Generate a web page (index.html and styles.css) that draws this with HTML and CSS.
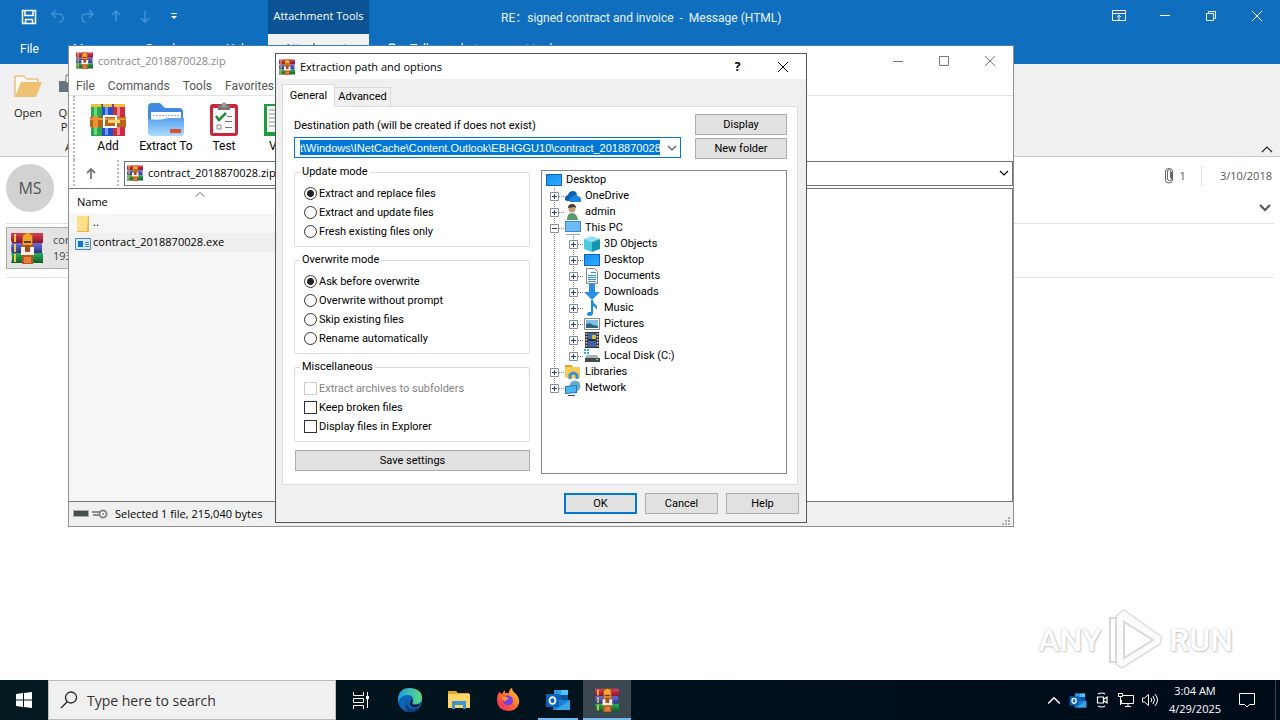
FILE: index.html
```html
<!DOCTYPE html>
<html lang="en">
<head>
<meta charset="utf-8">
<title>RE：signed contract and invoice - Message (HTML)</title>
<link rel="stylesheet" href="styles.css">
</head>
<body>
<svg class="defs" aria-hidden="true">
  <defs>
    <linearGradient id="gFolder" x1="0" y1="0" x2="0" y2="1"><stop offset="0" stop-color="#5aa2ee"/><stop offset="1" stop-color="#a9dcfb"/></linearGradient>
    <linearGradient id="gScreen" x1="0" y1="0" x2="1" y2="1"><stop offset="0" stop-color="#1590ee"/><stop offset="1" stop-color="#2fabff"/></linearGradient>
    <linearGradient id="gEdge" x1="0" y1="0" x2="1" y2="0"><stop offset="0" stop-color="#1b9de2"/><stop offset="1" stop-color="#5fdc7c"/></linearGradient>
    <linearGradient id="gFox" x1="0" y1="1" x2="1" y2="0"><stop offset="0" stop-color="#f0207a"/><stop offset=".5" stop-color="#ff6a2a"/><stop offset="1" stop-color="#ffd83a"/></linearGradient>
    <linearGradient id="gRed" x1="0" y1="0" x2="0" y2="1"><stop offset="0" stop-color="#d8405a"/><stop offset="1" stop-color="#86142a"/></linearGradient>
    <linearGradient id="gBlue" x1="0" y1="0" x2="0" y2="1"><stop offset="0" stop-color="#6a70d8"/><stop offset="1" stop-color="#2c2f86"/></linearGradient>
    <linearGradient id="gGreen" x1="0" y1="0" x2="0" y2="1"><stop offset="0" stop-color="#2fae58"/><stop offset="1" stop-color="#0c5f28"/></linearGradient>
    <symbol id="rar" viewBox="0 0 32 32">
      <path fill="url(#gRed)" d="M0 1h32v10H1Q-1 6 0 1z"/>
      <path fill="url(#gBlue)" d="M1 11h30v10H1q-2-5 0-10z"/>
      <path fill="url(#gGreen)" d="M0 21h32v10H0q2-5 0-10z"/>
      <path fill="#f2c94a" d="M3 2h2v8H3zM3 12h2v8H3zM3 22h2v8H3z"/>
      <path fill="#b9571a" d="M11 1h11v31H11z"/><path fill="#f3a534" d="M12 4q5-6 9 0v9h-9z"/><path fill="#6f3a1c" d="M13 9h7v2h-7z"/>
      <path fill="#f7f1ea" d="M10 15h13v8H10z"/><path fill="#a04c25" d="M14 13h5v7h-5z"/><path fill="#e0803a" d="M13 25h7v6h-7z"/>
    </symbol>
    <symbol id="screen" viewBox="0 0 16 16"><path fill="#0a69bd" d="M0 2h16v12H0z"/><path fill="url(#gScreen)" d="M1 3h14v10H1z"/></symbol>
    <symbol id="outlook" viewBox="0 0 24 24">
      <path fill="#1066b5" d="M8 2h14v10H8z"/><path fill="#2a9be8" d="M8 2h7v5H8z"/><path fill="#54c3f7" d="M15 2h7v5h-7z"/><path fill="#0f4f9b" d="M15 7h7v6h-7z"/>
      <path fill="#1a7fd0" d="M7 12h17v10H7z"/><path fill="#3aa5e6" d="M24 12v10H9z"/>
      <path fill="#0a63b8" d="M0 6h13v13H0z"/><ellipse cx="6.500" cy="12.500" rx="3" ry="3.400" fill="none" stroke="#fff" stroke-width="1.800"/>
    </symbol>
    <symbol id="close" viewBox="0 0 12 12"><path fill="none" stroke="currentColor" d="M1 1l10 10M11 1L1 11"/></symbol>
    <symbol id="down" viewBox="0 0 12 12"><path fill="none" stroke="currentColor" stroke-width="1.200" d="M2 4l4 4 4-4"/></symbol>
    <symbol id="up" viewBox="0 0 12 12"><path fill="none" stroke="currentColor" stroke-width="1.200" d="M1 9l5-5 5 5"/></symbol>
    <symbol id="twig" viewBox="0 0 19 16">
      <path fill="none" stroke="#888" stroke-dasharray="1 1" d="M8.500 0v16M13 8.500h6"/>
      <path fill="#fff" stroke="#8b8b9b" d="M4.500 4.500h8v8h-8z"/><path stroke="#223a8c" d="M6 8.500h5M8.500 6v5"/>
    </symbol>
    <symbol id="twigopen" viewBox="0 0 19 16">
      <path fill="none" stroke="#888" stroke-dasharray="1 1" d="M8.500 0v16M13 8.500h6"/>
      <path fill="#fff" stroke="#8b8b9b" d="M4.500 4.500h8v8h-8z"/><path stroke="#223a8c" d="M6 8.500h5"/>
    </symbol>
    <symbol id="twigend" viewBox="0 0 19 16">
      <path fill="none" stroke="#888" stroke-dasharray="1 1" d="M8.500 0v8M13 8.500h6"/>
      <path fill="#fff" stroke="#8b8b9b" d="M4.500 4.500h8v8h-8z"/><path stroke="#223a8c" d="M6 8.500h5M8.500 6v5"/>
    </symbol>
    <symbol id="guide" viewBox="0 0 19 16"><path fill="none" stroke="#888" stroke-dasharray="1 1" d="M8.500 0v16"/></symbol>
  </defs>
</svg>

<div class="desktop">
  <main class="outlook">
    <header class="ol-head">
      <div class="quick">
        <button aria-label="Save"><svg width="16" height="16" viewBox="0 0 16 16"><path fill="none" stroke="#fff" stroke-width="1.500" d="M1.500 1.500h13v13h-13zM4 1.500v5h8v-5M4.500 14.500v-4h7v4"/></svg></button>
        <button aria-label="Undo" class="dim"><svg width="16" height="16" viewBox="0 0 16 16"><path fill="none" stroke="currentColor" stroke-width="1.600" d="M6 1L2 5l4 4M2 5h7q4 0 4 4t-4 4"/></svg></button>
        <button aria-label="Redo" class="dim"><svg width="16" height="16" viewBox="0 0 16 16"><path fill="none" stroke="currentColor" stroke-width="1.600" d="M10 1l4 4-4 4M14 5H7Q3 5 3 9t4 4"/></svg></button>
        <button aria-label="Previous" class="dim"><svg width="16" height="16" viewBox="0 0 16 16"><path fill="none" stroke="currentColor" stroke-width="1.600" d="M8 13V2M4 6l4-4 4 4"/></svg></button>
        <button aria-label="Next" class="dim"><svg width="16" height="16" viewBox="0 0 16 16"><path fill="none" stroke="currentColor" stroke-width="1.600" d="M8 2v11M4 9l4 4 4-4"/></svg></button>
        <button aria-label="Customize"><svg width="16" height="16" viewBox="0 0 16 16"><path fill="#fff" d="M5 4h6v1H5zM5 7h6l-3 3z"/></svg></button>
      </div>
      <div class="ctx">Attachment Tools</div>
      <h1 class="ol-title">RE：signed contract and invoice&nbsp; -&nbsp; Message (HTML)</h1>
      <div class="ol-ctl">
        <button aria-label="Ribbon display"><svg width="14" height="12" viewBox="0 0 14 12"><path fill="none" stroke="#fff" d="M.5.500h13v10H.5zM.5 3.500h13M7 10V5M5 7l2-2 2 2"/></svg></button>
        <button aria-label="Minimize"><svg width="12" height="12" viewBox="0 0 12 12"><path stroke="#fff" d="M1 5.500h10"/></svg></button>
        <button aria-label="Restore"><svg width="12" height="12" viewBox="0 0 12 12"><path fill="none" stroke="#fff" d="M1.500 3.500h7v7h-7zM3.500 3V1.500h7v7H9"/></svg></button>
        <button aria-label="Close"><svg width="12" height="12"><use href="#close"/></svg></button>
      </div>
    </header>
    <nav class="ol-tabs">
      <a href="#" class="t-file">File</a><a href="#" class="t-msg">Message</a><a href="#" class="t-dev">Developer</a><a href="#" class="t-help">Help</a><a href="#" class="t-att">Attachments</a>
      <a href="#" class="tell"><svg width="14" height="14" viewBox="0 0 14 14"><path fill="none" stroke="#fff" stroke-width="1.300" d="M3 10a5 5 0 1 1 8 0M5 12h4"/></svg>Tell me what you want to do</a>
    </nav>
    <section class="ribbon">
      <button class="big"><svg width="30" height="26" viewBox="0 0 30 26"><path fill="#fff8ec" stroke="#dba756" d="M2 24V3h9l3 3h11v4"/><path fill="#efc177" d="M2 24L8 9h21l-6 15z"/></svg>Open</button>
      <button class="big"><svg width="30" height="26" viewBox="0 0 30 26"><path fill="#68737f" d="M1 8h22v11H1z"/><path fill="#fff" stroke="#68737f" d="M8 2h12v8H8z"/></svg>Quick<br>Print</button>
      <span class="group-name">Actions</span>
      <button class="fold" aria-label="Collapse ribbon"><svg width="12" height="12"><use href="#up"/></svg></button>
    </section>
    <section class="msg">
      <div class="avatar">MS</div>
      <div class="meta">
        <div class="meta-row"><svg width="10" height="16" viewBox="0 0 10 16"><path fill="none" stroke="#666" d="M7.500 4v7q0 1.500-2 1.500t-2-1.500V3q0-1 1-1h1q1 0 1 1v7M1.500 4v8q0 3 3.500 3t3.500-3V3Q8.500.500 5 .500T1.500 3z"/></svg><span>1</span><i class="bar"></i><time>3/10/2018</time></div>
        <button aria-label="Expand"><svg width="14" height="14" viewBox="0 0 14 14"><path fill="none" stroke="#555" stroke-width="2" d="M2 4l5 5 5-5"/></svg></button>
      </div>
    </section>
    <section class="attach">
      <button class="chip"><svg width="32" height="32"><use href="#rar"/></svg><span>contract.zip<br>193 KB</span></button>
    </section>
  </main>

  <div class="mark" aria-label="ANY.RUN"><span>ANY</span><svg width="60" height="64" viewBox="0 0 60 64"><path fill="#fbfbfb" stroke="#dedede" stroke-width="1.500" d="M11 8l8-6 38 27-2 7-38 24-6-4z"/><path fill="#fff" stroke="#d8d8d8" stroke-width="2" d="M19 14v36l29-18zM5 10h6v44H5z"/></svg><span>RUN</span></div>

  <section class="rarwin">
    <header class="rw-title"><svg width="17" height="17"><use href="#rar"/></svg><h2>contract_2018870028.zip</h2>
      <div class="rw-ctl">
        <button aria-label="Minimize"><svg width="12" height="12" viewBox="0 0 12 12"><path stroke="currentColor" d="M1 6.500h10"/></svg></button>
        <button aria-label="Maximize"><svg width="12" height="12" viewBox="0 0 12 12"><path fill="none" stroke="currentColor" d="M1.500 1.500h9v9h-9z"/></svg></button>
        <button aria-label="Close"><svg width="12" height="12"><use href="#close"/></svg></button>
      </div>
    </header>
    <nav class="rw-menu"><a href="#">File</a><a href="#">Commands</a><a href="#">Tools</a><a href="#">Favorites</a></nav>
    <div class="rw-tools">
      <button><svg width="36" height="36" viewBox="0 0 36 36">
        <path fill="#2aa84a" d="M1 2h11v32H1z"/><path fill="#69d880" d="M4 4h3v29H4z"/><path fill="#2750c8" d="M12 2h11v32H12z"/><path fill="#6d9bff" d="M15 4h3v29h-3z"/><path fill="#c92d44" d="M23 2h12v32H23z"/><path fill="#f58090" d="M27 4h3v29h-3z"/>
        <path fill="#f0c03a" d="M1 2h10v3H1zM13 2h9v3h-9zM24 2h11v3H24z"/><path fill="#b96318" d="M0 15h36v10H0z"/><path fill="#e79436" d="M0 16h36v2H0zM3 14h5v12H3z"/><path fill="none" stroke="#fff" stroke-width="2" d="M14 14h12v11H14z"/><path fill="#f7d27a" d="M18 18h12v3H18z"/></svg>Add</button>
      <button><svg width="36" height="36" viewBox="0 0 36 36"><path fill="#4389df" d="M0 5q0-4 4-4h8l5 5h14q4 0 4 4v8H0z"/><path fill="#fff" d="M3 10h30v14H3z"/><path stroke="#9bb7d8" stroke-dasharray="2 1" d="M5 13.500h26"/><path fill="url(#gFolder)" d="M0 17q12 2 20-1h16v14q0 4-4 4H4q-4 0-4-4z"/><path fill="#e54a32" d="M22 27h11v4H22z"/></svg>Extract To</button>
      <button><svg width="36" height="36" viewBox="0 0 36 36"><rect x="4" y="2" width="28" height="32" rx="3" fill="#c9273b"/><path fill="#fafafa" d="M7 6h22v25H7z"/><path fill="#777" d="M12 3h12v5H12z"/><circle cx="18" cy="3" r="2.500" fill="#999"/><path fill="none" stroke="#248a3e" stroke-width="2.500" d="M10 14l3 4 7-7"/><path stroke="#777" d="M19 19.500h7M19 25.500h7M21 14.500h5"/><path fill="none" stroke="#888" d="M11 23h4v4h-4z"/></svg>Test</button>
      <button><svg width="36" height="36" viewBox="0 0 36 36"><path fill="#1f9a40" d="M0 2h36v32H0z"/><path fill="#f3f7f3" d="M3 4h30v26H3z"/><path stroke="#999" d="M5 8h12M5 12h12M5 16h12M5 20h12M5 24h12"/></svg>View</button>
    </div>
    <div class="rw-addr">
      <button aria-label="Up one level"><svg width="12" height="12" viewBox="0 0 12 12"><path fill="none" stroke="#777" stroke-width="1.800" d="M6 12V2M2 6l4-4 4 4"/></svg></button>
      <div class="rw-path"><svg width="16" height="16"><use href="#rar"/></svg><input aria-label="Archive path" value="contract_2018870028.zip"><svg width="12" height="12"><use href="#down"/></svg></div>
    </div>
    <div class="rw-list">
      <table>
        <thead><tr><th><svg width="10" height="10" viewBox="0 0 12 12"><use href="#up"/></svg>Name</th><td></td></tr></thead>
        <tbody>
          <tr><td><svg width="16" height="17" viewBox="0 0 16 17"><path fill="#e5b94a" d="M2 1h12v16H2z"/><path fill="#ffe08a" d="M2 1h11l-1 15H2z"/></svg>..</td><td></td></tr>
          <tr class="sel"><td><svg width="16" height="12" viewBox="0 0 16 12"><path fill="#d4ecfb" stroke="#4e86b4" d="M.5.500h15v11H.5z"/><path fill="#1374cf" d="M3 3h5v6H3z"/><path stroke="#4e86b4" d="M10 4.500h4M10 6.500h4M10 8.500h4"/></svg>contract_2018870028.exe</td><td></td></tr>
        </tbody>
      </table>
    </div>
    <footer class="rw-status">
      <svg width="16" height="10" viewBox="0 0 16 10"><path fill="#aaa" d="M0 1h16v7H0z"/><path fill="#444f4f" d="M1 2h14v5H1z"/></svg>
      <svg width="16" height="10" viewBox="0 0 16 10"><path stroke="#8c8c8c" stroke-width="2" d="M0 3h9M1 6h7"/><circle cx="11" cy="5" r="3.500" fill="#fff" stroke="#888" stroke-width="2"/><circle cx="11" cy="5" r="1" fill="#777"/></svg>
      <span>Selected 1 file, 215,040 bytes</span>
      <svg class="grip" width="10" height="10" viewBox="0 0 10 10"><path fill="#aaa" d="M7 1h2v2H7zM4 4h2v2H4zM7 4h2v2H7zM1 7h2v2H1zM4 7h2v2H4zM7 7h2v2H7z"/></svg>
    </footer>
  </section>

  <form class="dialog">
    <header class="d-title"><svg width="16" height="16"><use href="#rar"/></svg><h2>Extraction path and options</h2>
      <button type="button" aria-label="Help" class="q">?</button><button type="button" aria-label="Close"><svg width="12" height="12"><use href="#close"/></svg></button></header>
    <div class="d-tabs"><button type="button" class="on">General</button><button type="button">Advanced</button></div>
    <div class="panel">
      <div class="dest">
        <div class="dest-l">
          <label for="dest">Destination path (will be created if does not exist)</label>
          <div class="combo"><input id="dest" value="t\Windows\INetCache\Content.Outlook\EBHGGU10\contract_2018870028"><button type="button" aria-label="Recent paths"><svg width="12" height="12"><use href="#down"/></svg></button></div>
        </div>
        <div class="dest-r"><button type="button" class="btn">Display</button><button type="button" class="btn">New folder</button></div>
      </div>
      <div class="cols">
        <div class="opts">
          <fieldset><legend>Update mode</legend>
            <label><input type="radio" name="u" checked>Extract and replace files</label>
            <label><input type="radio" name="u">Extract and update files</label>
            <label><input type="radio" name="u">Fresh existing files only</label></fieldset>
          <fieldset><legend>Overwrite mode</legend>
            <label><input type="radio" name="o" checked>Ask before overwrite</label>
            <label><input type="radio" name="o">Overwrite without prompt</label>
            <label><input type="radio" name="o">Skip existing files</label>
            <label><input type="radio" name="o">Rename automatically</label></fieldset>
          <fieldset><legend>Miscellaneous</legend>
            <label class="off"><input type="checkbox" disabled>Extract archives to subfolders</label>
            <label><input type="checkbox">Keep broken files</label>
            <label><input type="checkbox">Display files in Explorer</label></fieldset>
          <button type="button" class="btn save">Save settings</button>
        </div>
        <ul class="tree">
          <li><svg class="ic"><use href="#screen"/></svg>Desktop</li>
          <li><svg class="tw"><use href="#twig"/></svg><svg class="ic" viewBox="0 0 16 16"><path fill="#0f5fb5" d="M0 12q-1-4 3-5 1-4 5-4 3 0 4 3l-6 7H2z"/><path fill="#1d86dc" d="M5 14q-2-5 2-5 3-4 6-1 4 1 3 6z"/></svg>OneDrive</li>
          <li><svg class="tw"><use href="#twig"/></svg><svg class="ic" viewBox="0 0 16 16"><path fill="#5a9a6c" d="M2 16q0-7 5-7t6 7z"/><circle cx="7" cy="5" r="3.500" fill="#c79a78"/><path fill="#4d3b33" d="M3 4q0-4 4-4t4 4L9 3z"/></svg>admin</li>
          <li><svg class="tw"><use href="#twigopen"/></svg><svg class="ic" viewBox="0 0 16 16"><path fill="#3b8ac8" d="M0 1h16v11H0z"/><path fill="#6bbcf4" d="M1 2h14v9H1z"/><path fill="#9aa8b4" d="M1 14h14v1H1z"/></svg>This PC</li>
          <li><svg class="tw"><use href="#guide"/></svg><svg class="tw"><use href="#twig"/></svg><svg class="ic" viewBox="0 0 16 16"><path fill="#8de3ee" d="M0 3l8-3 8 3-8 3z"/><path fill="#4ccbe0" d="M0 3l8 3v10l-8-3z"/><path fill="#1697ae" d="M16 3L8 6v10l8-3z"/></svg>3D Objects</li>
          <li><svg class="tw"><use href="#guide"/></svg><svg class="tw"><use href="#twig"/></svg><svg class="ic"><use href="#screen"/></svg>Desktop</li>
          <li><svg class="tw"><use href="#guide"/></svg><svg class="tw"><use href="#twig"/></svg><svg class="ic" viewBox="0 0 16 16"><path fill="#fff" stroke="#808890" d="M2.500.500h8l3 3v12h-11z"/><path stroke="#2e8fd8" d="M7 4.500h5M4 7.500h8M4 9.500h8M4 11.500h8M4 13.500h8"/></svg>Documents</li>
          <li><svg class="tw"><use href="#guide"/></svg><svg class="tw"><use href="#twig"/></svg><svg class="ic" viewBox="0 0 16 16"><path fill="#2c8ee0" d="M5 0h6v8h5l-8 8-8-8h5z"/></svg>Downloads</li>
          <li><svg class="tw"><use href="#guide"/></svg><svg class="tw"><use href="#twig"/></svg><svg class="ic" viewBox="0 0 16 16"><path fill="#1a8be4" d="M7 0h2q0 3 3 5 2 2 0 5 0-3-3-4v7q0 3-4 3-2 0-2-2 1-3 4-2z"/></svg>Music</li>
          <li><svg class="tw"><use href="#guide"/></svg><svg class="tw"><use href="#twig"/></svg><svg class="ic" viewBox="0 0 16 16"><path fill="#fff" stroke="#808890" d="M.5 2.500h15v11H.5z"/><path fill="#7fc0ea" d="M2 4h12v8H2z"/><path fill="#2f6678" d="M2 8q4-2 7 1l5 1v2H2z"/></svg>Pictures</li>
          <li><svg class="tw"><use href="#guide"/></svg><svg class="tw"><use href="#twig"/></svg><svg class="ic" viewBox="0 0 16 16"><path fill="#333" d="M1 0h14v16H1z"/><path fill="#3e63a8" d="M4 1h8v6H4zM4 9h8v6H4z"/><path fill="#d3be3c" d="M8 3h4v4H8z"/><path stroke="#ddd" stroke-width="1.500" stroke-dasharray="1.500 1.500" d="M2.500 1v14M13.500 1v14"/></svg>Videos</li>
          <li><svg class="tw"><use href="#guide"/></svg><svg class="tw"><use href="#twigend"/></svg><svg class="ic" viewBox="0 0 16 16"><path fill="#2bb3e8" d="M0 1h2v2H0zM3 1h2v2H3zM0 4h2v2H0zM3 4h2v2H3z"/><path fill="#a9afb3" d="M3 7h10l2 3H1z"/><path fill="#444b4f" d="M1 10h15v4H1z"/><path fill="#6f6" d="M12 11h2v1h-2z"/></svg>Local Disk (C:)</li>
          <li><svg class="tw"><use href="#twig"/></svg><svg class="ic" viewBox="0 0 16 16"><path fill="#e0a028" d="M0 1h6l2 2H0z"/><path fill="#f7cb55" d="M0 3h15v11H0z"/><path fill="none" stroke="#3a93cf" stroke-width="3" d="M5 15v-4q3-4 7 0v4"/></svg>Libraries</li>
          <li><svg class="tw"><use href="#twigend"/></svg><svg class="ic" viewBox="0 0 16 16"><circle cx="10" cy="6" r="5.500" fill="#6aaecb"/><path fill="#1f78b8" d="M0 6l12-1v8L0 14z"/><path fill="#4db3ea" d="M1 7l10-1v6L1 13z"/><path fill="#356" d="M3 15h7v1H3z"/></svg>Network</li>
        </ul>
      </div>
    </div>
    <footer class="d-foot"><button type="button" class="btn ok">OK</button><button type="button" class="btn">Cancel</button><button type="button" class="btn">Help</button></footer>
  </form>
</div>

<footer class="taskbar">
  <button class="start" aria-label="Start"><svg width="16" height="16" viewBox="0 0 16 16"><path fill="#fff" d="M0 2l7-1v6.500H0zM8 1l8-1v7.500H8zM0 8.500h7V15l-7-1zM8 8.500h8V16l-8-1z"/></svg></button>
  <label class="search"><svg width="18" height="18" viewBox="0 0 18 18"><circle cx="11" cy="6.500" r="5.500" fill="none" stroke="#222" stroke-width="1.300"/><path stroke="#222" stroke-width="1.300" d="M7 11l-6 6"/></svg><input placeholder="Type here to search" aria-label="Type here to search"></label>
  <button aria-label="Task view"><svg width="18" height="18" viewBox="0 0 18 18"><path fill="none" stroke="#fff" d="M1.500 1v3.500h10V1M1.500 7.500h10v4h-10zM1.500 18v-3.500h10V18M15.500 1v16"/><path fill="#fff" d="M14 5h3v3h-3z"/></svg></button>
  <button aria-label="Edge"><svg width="24" height="24" viewBox="0 0 24 24"><circle cx="12" cy="12" r="12" fill="#0c66b8"/><path fill="url(#gEdge)" d="M0 11Q1 0 12 0q12 1 12 10 0 6-7 6-4 0-2-3 1-6-5-6Q3 7 0 14z"/><path fill="#123f7c" d="M9 12q-1 8 6 9 4 0 6-2-4 6-11 5-5-4-1-12z"/><path fill="#03161f" d="M15 13q-3 4 2 4 4 0 6-2-3 5-7 4-6-1-3-7 2-1 2 1z"/></svg></button>
  <button aria-label="File Explorer"><svg width="22" height="20" viewBox="0 0 22 20"><path fill="#e5a52a" d="M0 1h8l2 2h11v4H0z"/><path fill="#fbd567" d="M0 4h22v14H0z"/><path fill="#3b93d0" d="M4 11h14v8h-3v-4H7v4H4z"/></svg></button>
  <button aria-label="Firefox"><svg width="24" height="24" viewBox="0 0 24 24"><path fill="url(#gFox)" d="M3 4l3 2q1-2 3-4v3q3 0 4 0 0-4 3-5 0 3 4 6 4 4 3 9-2 8-11 8Q1 22 1 12q0-5 2-8z"/><circle cx="12" cy="12.500" r="5" fill="#7a3fe0"/><path fill="#ff9a2a" d="M6 9q5-1 7 2-3 0-3 2-3 1-4-4z"/></svg></button>
  <button aria-label="Outlook" class="run"><svg width="24" height="24"><use href="#outlook"/></svg></button>
  <button aria-label="WinRAR" class="run active"><svg width="24" height="24"><use href="#rar"/></svg></button>
  <div class="tray">
    <svg width="18" height="14" viewBox="0 0 12 12"><use href="#up"/></svg>
    <svg width="18" height="17" viewBox="0 0 24 24"><use href="#outlook"/></svg>
    <svg width="18" height="16" viewBox="0 0 14 16"><path fill="none" stroke="#fff" stroke-width="1.200" d="M2.500 5h6v6h-6zM9 7l3-2v6L9 9M3 2q4-2 7 0M3 14q4 2 7 0"/></svg>
    <svg width="18" height="16" viewBox="0 0 18 16"><path fill="none" stroke="#fff" d="M6 3.500h10.500v8H4.500V8M8 14.500h6M11 12v2M1.500 1.500h4v3h-4zM3.500 5v8"/></svg>
    <svg width="18" height="16" viewBox="0 0 18 16"><path fill="none" stroke="#fff" d="M1.500 6v4h2L7.500 13.500v-11L3.500 6zM10 6q1.500 2 0 4M12 4q3 4 0 8M14 2q5 6 0 12"/></svg>
    <div class="clock">3:04 AM<br>4/29/2025</div>
    <svg class="note" width="16" height="16" viewBox="0 0 16 16"><path fill="none" stroke="#fff" d="M.5 1.500h15v11h-5L8 15l-2.500-2.500h-5z"/></svg>
  </div>
</footer>
</body>
</html>
```
FILE: styles.css
```css
* { box-sizing: border-box; }
body {
  margin: 0;
  height: 100vh;
  display: flex;
  flex-direction: column;
  overflow: hidden;
  background: #fff;
  color: #000;
  font: 11px/14px "Open Sans", "Noto Sans", "Noto Sans CJK SC", sans-serif;
}
button, input { font: inherit; color: inherit; margin: 0; padding: 0; border: 0; background: none; outline: 0; }
button { display: flex; align-items: center; justify-content: center; }
a { color: inherit; text-decoration: none; }
h1, h2 { margin: 0; font: inherit; }
svg { flex: none; display: block; }
.defs { position: absolute; width: 0; height: 0; }
.desktop { position: relative; flex: 1; min-height: 0; }

/* Mail window */
.ol-head { display: grid; grid-template-columns: 268px 101px 1fr auto; height: 34px; background: #106ebe; color: #fff; }
.quick { display: flex; align-items: center; gap: 13px; padding: 0 0 2px 21px; }
.dim { color: #4090d6; }
.ctx { background: #0b5394; text-align: center; line-height: 32px; }
.ol-title { font-family: Roboto, "Noto Sans CJK SC", sans-serif; font-size: 12px; line-height: 36px; padding-left: 132px; color: #e6f4ff; }
.ol-ctl { display: flex; }
.ol-ctl button { width: 46px; height: 31px; }
.ol-tabs { display: flex; height: 30px; background: #106ebe; color: #fff; line-height: 30px; font-family: Roboto, sans-serif; font-size: 12px; }
.t-file { width: 73px; padding-left: 20px; }
.t-msg { width: 73px; }
.t-dev { width: 80px; }
.t-help { width: 42px; }
.t-att { width: 101px; text-align: center; background: #f1f1f1; color: #2b579a; }
.tell { display: flex; align-items: center; gap: 11px; padding-left: 16px; }
.ribbon { position: relative; display: flex; height: 93px; padding-top: 9px; background: #f1f1f1; border-bottom: 1px solid #c8c8c8; color: #222; font-size: 11px; }
.ribbon .big { flex-direction: column; justify-content: flex-start; width: 56px; gap: 7px; line-height: 14px; }
.ribbon .big + .big { width: 34px; }
.group-name { position: absolute; left: 65px; bottom: 2px; }
.fold { position: absolute; right: 7px; bottom: 1px; }
.msg { display: flex; justify-content: space-between; height: 67px; margin: 0 6px; border-bottom: 1px solid #e1e1e1; }
.avatar { width: 48px; height: 48px; margin-top: 7px; border-radius: 50%; background: #d2d2d2; color: #555; text-align: center; font-size: 16px; line-height: 48px; }
.meta { display: flex; flex-direction: column; align-items: flex-end; gap: 14px; padding: 8px 2px 0 0; color: #555; }
.meta-row { display: flex; align-items: center; height: 22px; gap: 6px; }
.bar { width: 1px; height: 20px; margin: 0 12px 0 9px; background: #ddd; }
.attach { height: 54px; margin: 0 6px; padding-top: 3px; border-bottom: 1px solid #e1e1e1; }
.chip { width: 180px; height: 42px; justify-content: flex-start; gap: 10px; padding-left: 4px; border: 1px solid #aaa; background: #e3e3e3; color: #444; text-align: left; line-height: 16px; }

.mark { position: absolute; right: 47px; bottom: 8px; display: flex; align-items: center; gap: 4px; font: 500 32px/64px Roboto, sans-serif; color: #fff; text-shadow: 0 0 2px #bbb, 1px 1px 2px #ccc; }

/* Archive window */
.rarwin { position: absolute; left: 68px; top: 45px; width: 946px; display: flex; flex-direction: column; background: #fff; border: 1px solid #909090; border-top-color: #3c7ebc; font-family: Roboto, "Liberation Sans", sans-serif; }
.rw-title { display: flex; align-items: center; height: 29px; padding-left: 7px; gap: 5px; color: #8a8a8a; }
.rw-title h2, .rw-path input, .rw-list table { font-family: "Open Sans", "Noto Sans", sans-serif; font-size: 11px; }
.rw-title h2 { flex: 1; }
.rw-ctl { display: flex; color: #777; }
.rw-ctl button { width: 46px; height: 29px; }
.rw-menu { display: flex; gap: 13px; height: 21px; padding-left: 7px; border-bottom: 1px solid #e2e2e2; color: #555; line-height: 22px; font-size: 12px; }
.rw-tools { display: flex; height: 64px; margin-left: 4px; padding: 6px 0 0 4px; border-left: 2px dotted #bbb; font-size: 12px; overflow: hidden; }
.rw-tools button { flex-direction: column; justify-content: flex-start; width: 58px; line-height: 16px; }
.rw-addr { display: flex; align-items: center; height: 26px; margin-left: 4px; border-left: 2px dotted #bbb; }
.rw-addr > button { width: 44px; height: 26px; padding-right: 10px; border-right: 2px dotted #bbb; }
.rw-path { flex: 1; display: flex; align-items: center; gap: 5px; height: 25px; margin-left: 5px; padding: 0 2px; border: 1px solid #707070; }
.rw-path input { flex: 1; }
.rw-list { height: 314px; margin-top: 2px; border: 1px solid #777; border-left: 0; background: linear-gradient(90deg, #f6f6f6 260px, #fff 260px); }
.rw-list table { width: 100%; border-collapse: collapse; table-layout: fixed; }
.rw-list th, .rw-list td { padding: 0; height: 19px; text-align: left; font-weight: normal; }
.rw-list th { position: relative; width: 260px; height: 25px; padding-left: 8px; background: #fff; }
.rw-list th svg { position: absolute; left: 126px; top: 0; color: #666; }
.rw-list tbody svg { display: inline-block; vertical-align: middle; margin: 0 2px 0 6px; }
.rw-list .sel td:first-child { background: #efefef; }
.rw-status { display: flex; align-items: center; height: 24px; gap: 3px; padding: 0 2px 0 4px; background: #f0f0f0; font-family: "Open Sans", sans-serif; }
.rw-status span { margin-left: 4px; }
.grip { margin-left: auto; align-self: flex-end; }

/* Extraction dialog */
.dialog { position: absolute; left: 275px; top: 53px; width: 532px; background: #f0f0f0; border: 1px solid #555; font-family: Roboto, "Liberation Sans", sans-serif; }
.d-title { display: flex; align-items: center; height: 25px; padding: 0 1px 0 3px; background: #fff; font-family: "Open Sans", sans-serif; }
.d-title h2 { flex: 1; margin-left: 5px; }
.d-title button { width: 45px; height: 24px; }
.d-title .q { font-weight: bold; font-size: 12px; }
.d-tabs { display: flex; align-items: flex-end; height: 27px; padding: 0 6px; }
.d-tabs button { height: 19px; width: 56px; border: 1px solid #d9d9d9; border-bottom: 0; border-left: 0; }
.d-tabs .on { position: relative; height: 23px; width: 53px; margin-bottom: -1px; border-left: 1px solid #d9d9d9; background: #fff; }
.panel { margin: 0 8px 0 6px; padding: 7px 10px 10px 11px; background: #fff; border: 1px solid #dcdcdc; }
.dest { display: flex; gap: 14px; }
.dest-l { flex: 1; padding-top: 5px; }
.dest-l label { display: block; margin-bottom: 4px; }
.combo { display: flex; height: 21px; padding: 2px 2px 2px 5px; border: 1px solid #0078d7; }
.combo input { flex: 1; min-width: 0; background: #0078d7; color: #fff; font-family: "Liberation Sans", sans-serif; }
.combo button { width: 18px; padding-left: 5px; color: #555; }
.dest-r { display: flex; flex-direction: column; gap: 3px; width: 92px; }
.btn { height: 21px; background: #e1e1e1; border: 1px solid #adadad; }
.cols { display: flex; gap: 11px; margin-top: 6px; }
.opts { width: 236px; display: flex; flex-direction: column; gap: 6px; padding-bottom: 3px; }
fieldset { min-width: 0; margin: 0; padding: 5px 9px; border: 1px solid #dcdcdc; border-radius: 2px; }
legend { margin-left: -4px; padding: 0 2px; line-height: 14px; }
fieldset label { display: flex; align-items: center; gap: 2px; height: 19px; }
fieldset input { appearance: none; width: 13px; height: 13px; border: 1px solid #333; background: #fff; }
fieldset input[type="radio"] { border-radius: 50%; }
fieldset input:checked { background: radial-gradient(circle, #222 3px, #fff 4px); }
.off { color: #838383; }
.off input { border-color: #ccc; }
.save { margin: 2px 0 0 1px; }
.tree { flex: 1; margin: 5px 0 0; padding: 1px 0 0 4px; list-style: none; border: 1px solid #828790; }
.tree li { display: flex; align-items: center; height: 16px; line-height: 16px; white-space: pre; }
.tw { width: 19px; height: 16px; }
.ic { width: 16px; height: 16px; margin-right: 4px; }
.d-foot { display: flex; justify-content: flex-end; gap: 8px; padding: 8px 7px; }
.d-foot .btn { width: 73px; }
.d-foot .ok { border: 2px solid #0078d7; }

/* Taskbar */
.taskbar { display: flex; height: 40px; background: linear-gradient(90deg, #021920, #000b1a); color: #fff; }
.taskbar > button { width: 49px; }
.taskbar .start { width: 48px; }
.search { display: flex; align-items: center; gap: 9px; width: 288px; padding-left: 11px; background: #f0f0f0; border: 1px solid #bbb; }
.search input { flex: 1; min-width: 0; font-size: 14px; }
.search input::placeholder { color: #333; opacity: 1; }
.taskbar .run { border-bottom: 2px solid #76b9ed; padding-top: 2px; width: 40px; margin: 0 5px 0 6px; }
.taskbar .active { width: 48px; margin: 0; background: #3a474f; }
.tray { display: flex; align-items: center; gap: 6px; margin: 0 4px 0 auto; padding-right: 20px; border-right: 1px solid #3a4450; }
.clock { width: 60px; text-align: center; line-height: 18px; }
.note { margin-left: 8px; }
```
